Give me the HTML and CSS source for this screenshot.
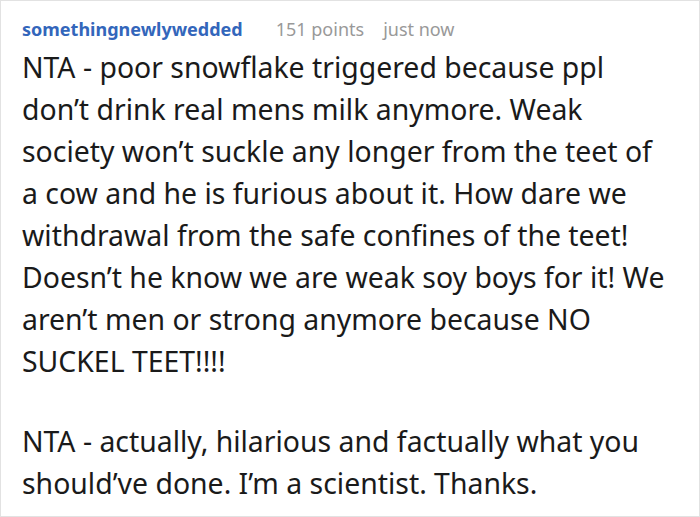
FILE: index.html
```html
<!DOCTYPE html>
<html>
<head>
<meta charset="utf-8">
<link rel="stylesheet" href="styles.css">
</head>
<body>
<div class="comment">
  <div class="meta">
    <span class="author">somethingnewlywedded</span>
    <span class="points">151 points</span>
    <span class="time">just now</span>
  </div>
  <div class="body">
    <p>NTA - poor snowflake triggered because ppl don’t drink real mens milk anymore. Weak society won’t suckle any longer from the teet of a cow and he is furious about it. How dare we withdrawal from the safe confines of the teet! Doesn’t he know we are weak soy boys for it! We aren’t men or strong anymore because NO SUCKEL TEET!!!!</p>
    <p>NTA - actually, hilarious and factually what you should’ve done. I’m a scientist. Thanks.</p>
  </div>
</div>
</body>
</html>
```
FILE: styles.css
```css
html, body {
  margin: 0;
  padding: 0;
  background: #fff;
}
.comment {
  box-sizing: border-box;
  width: 700px;
  height: 517px;
  border: 1px solid #e2e2e2;
  padding: 16px 0 0 21px;
  font-family: "Noto Sans", "Open Sans", sans-serif;
}
.meta {
  display: flex;
  font-size: 18px;
  line-height: 24px;
}
.author {
  color: #3366bb;
  font-weight: bold;
  margin-right: 33px;
}
.points {
  color: #999;
  margin-right: 19px;
}
.time {
  color: #999;
}
.body {
  width: 647px;
  margin-top: 5px;
  color: #1a1a1a;
  font-size: 28.4px;
  line-height: 42px;
}
.body p {
  margin: 0 0 38px 0;
}
```
